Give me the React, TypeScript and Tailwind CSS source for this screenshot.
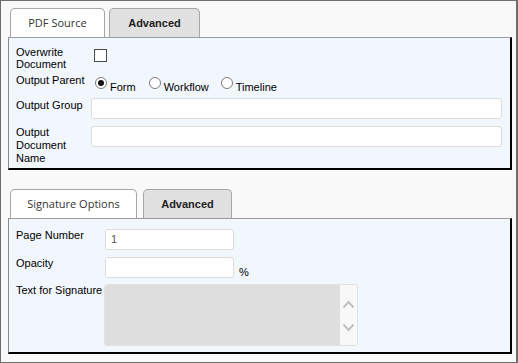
import React from "react";

const labelCls = "text-[11px] leading-[12px] text-black shrink-0";

const Tab = ({
  title,
  active,
  width,
}: {
  title: string;
  active?: boolean;
  width: string;
}) => {
  return (
    <div
      className={`${width} h-[29px] rounded-t-[5px] border border-b-0 border-[#a6a6a6] flex items-center justify-center ${
        active
          ? "bg-[#e1e1e1] font-bold text-[11px] text-[#222] [font-family:'Liberation_Sans',Arial,sans-serif]"
          : "bg-white text-[11px] text-[#333] [font-family:'Open_Sans',sans-serif]"
      }`}
    >
      {title}
    </div>
  );
};

const Radio = ({ checked }: { checked?: boolean }) => (
  <span className="mt-[3px] w-[12px] h-[12px] rounded-full border border-[#7a7a7a] bg-white flex items-center justify-center shrink-0">
    {checked && <span className="w-[6px] h-[6px] rounded-full bg-[#111]" />}
  </span>
);

const TextBox = ({ width, value }: { width: string; value?: string }) => (
  <div
    className={`${width} h-[21px] bg-white border border-[#dcdcdc] rounded-[3px] pl-[5px] text-[11px] leading-[19px] text-[#555]`}
  >
    {value}
  </div>
);

const App = () => {
  return (
    <div className="w-[518px] h-[363px] border border-r-2 border-[#6e6e6e] bg-[#f9f9f9] pl-[7px] pt-[7px] [font-family:'Liberation_Sans',Arial,sans-serif]">
      {/* first tab group */}
      <div className="flex gap-[4px] ml-[2px]">
        <Tab title="PDF Source" width="w-[95px]" />
        <Tab title="Advanced" width="w-[91px]" active />
      </div>
      <div className="w-[504px] bg-[#f2f6fd] border-l border-t border-l-[#8a8a8a] border-t-[#9c9c9c] border-r-2 border-b-2 border-r-black border-b-black pl-[7px] pr-[8px] pt-[8px] pb-[3px]">
        <div className="flex">
          <div className={`${labelCls} w-[75px]`}>
            Overwrite
            <br />
            Document
          </div>
          <span className="ml-[3px] mt-[3px] w-[13px] h-[13px] border border-[#4a4a4a] bg-white" />
        </div>

        <div className="flex mt-[4px]">
          <div className={`${labelCls} w-[75px]`}>Output Parent</div>
          <div className="flex items-start ml-[4px] text-[11px] leading-[12px] text-black">
            <Radio checked />
            <span className="ml-[3px] mt-[7px]">Form</span>
            <span className="ml-[13px]" />
            <Radio />
            <span className="ml-[3px] mt-[7px]">Workflow</span>
            <span className="ml-[12px]" />
            <Radio />
            <span className="ml-[3px] mt-[7px]">Timeline</span>
          </div>
        </div>

        <div className="flex mt-[5px]">
          <div className={`${labelCls} w-[75px] mt-[1px]`}>Output Group</div>
          <TextBox width="w-[411px]" />
        </div>

        <div className="flex mt-[7px]">
          <div className="text-[11px] leading-[13px] text-black w-[75px] shrink-0">
            Output
            <br />
            Document
            <br />
            Name
          </div>
          <TextBox width="w-[411px]" />
        </div>
      </div>

      {/* second tab group */}
      <div className="flex gap-[6px] ml-[2px] mt-[19px]">
        <Tab title="Signature Options" width="w-[127px]" />
        <Tab title="Advanced" width="w-[89px]" active />
      </div>
      <div className="w-[504px] bg-[#f2f6fd] border-l border-t border-l-[#8a8a8a] border-t-[#9c9c9c] border-r-2 border-b-2 border-r-black border-b-black pl-[7px] pr-[8px] pt-[10px] pb-[6px]">
        <div className="flex">
          <div className={`${labelCls} w-[89px]`}>Page Number</div>
          <TextBox width="w-[129px]" value="1" />
        </div>

        <div className="flex mt-[7px]">
          <div className={`${labelCls} w-[89px]`}>Opacity</div>
          <TextBox width="w-[129px]" />
          <span className="self-end ml-[5px] text-[11px] leading-[12px] text-black">%</span>
        </div>

        <div className="flex mt-[6px]">
          <div className={`${labelCls} w-[88px]`}>Text for Signature</div>
          <div className="w-[254px] h-[62px] flex rounded-[3px] border border-[#e2e2e2] overflow-hidden">
            <div className="flex-1 bg-[#dedede]" />
            <div className="w-[17px] bg-[#f8f8f8] flex flex-col items-center justify-center gap-[14px] pt-[2px]">
              <svg width="13" height="9" viewBox="0 0 13 9">
                <polyline points="1.5,7.5 6.5,2 11.5,7.5" fill="none" stroke="#c2c2c2" strokeWidth="2" />
              </svg>
              <svg width="13" height="9" viewBox="0 0 13 9">
                <polyline points="1.5,1.5 6.5,7 11.5,1.5" fill="none" stroke="#c2c2c2" strokeWidth="2" />
              </svg>
            </div>
          </div>
        </div>
      </div>
    </div>
  );
};

export default App;
